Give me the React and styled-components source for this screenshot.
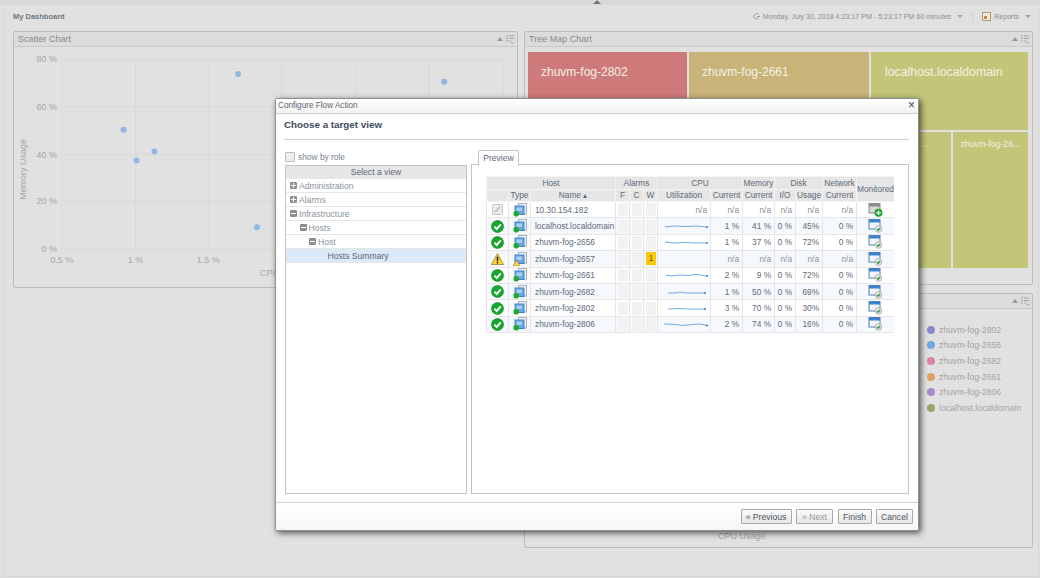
import React from "react";
import styled, { createGlobalStyle } from "styled-components";

const hosts = [
  { status: "none", name: "10.30.154.182", util: null, cpu: "n/a", mem: "n/a", io: "n/a", usage: "n/a", net: "n/a" },
  { status: "ok", name: "localhost.localdomain", util: [[7, 7], [16, 6], [28, 6.5], [38, 6], [49, 7]], cpu: "1 %", mem: "41 %", io: "0 %", usage: "45%", net: "0 %" },
  { status: "ok", name: "zhuvm-fog-2656", util: [[7, 6], [16, 7], [27, 6.5], [38, 7], [49, 7]], cpu: "1 %", mem: "37 %", io: "0 %", usage: "72%", net: "0 %" },
  { status: "warn", name: "zhuvm-fog-2657", util: null, alarm: 1, cpu: "n/a", mem: "n/a", io: "n/a", usage: "n/a", net: "n/a" },
  { status: "ok", name: "zhuvm-fog-2661", util: [[8, 6], [14, 7], [22, 6], [30, 6.5], [38, 5.5], [49, 7]], cpu: "2 %", mem: "9 %", io: "0 %", usage: "72%", net: "0 %" },
  { status: "ok", name: "zhuvm-fog-2682", util: [[10, 7], [18, 7], [22, 6], [28, 7], [47, 7]], cpu: "1 %", mem: "50 %", io: "0 %", usage: "69%", net: "0 %" },
  { status: "ok", name: "zhuvm-fog-2802", util: [[10, 7], [20, 6.5], [30, 7], [47, 7]], cpu: "3 %", mem: "70 %", io: "0 %", usage: "30%", net: "0 %" },
  { status: "ok", name: "zhuvm-fog-2806", util: [[6, 6], [18, 6.5], [24, 7.5], [34, 6.5], [42, 6], [49, 7.5]], cpu: "2 %", mem: "74 %", io: "0 %", usage: "16%", net: "0 %" },
];

const treeItems = [
  { label: "Administration", depth: 0, mark: "plus" },
  { label: "Alarms", depth: 0, mark: "plus" },
  { label: "Infrastructure", depth: 0, mark: "minus" },
  { label: "Hosts", depth: 1, mark: "minus" },
  { label: "Host", depth: 2, mark: "minus" },
  { label: "Hosts Summary", depth: 3, selected: true },
];

const legend = [
  ["zhuvm-fog-2802", "#8b88cc"],
  ["zhuvm-fog-2656", "#6ea8e0"],
  ["zhuvm-fog-2682", "#e080a8"],
  ["zhuvm-fog-2661", "#e0a060"],
  ["zhuvm-fog-2806", "#a88cd0"],
  ["localhost.localdomain", "#98a46c"],
];

const GlobalStyle = createGlobalStyle`
  html, body {
    margin: 0;
    padding: 0;
    height: 100%;
    overflow: hidden;
    background: #e1e1e1;
    font-family: "Liberation Sans", Arial, sans-serif;
    font-size: 8.5px;
  }
`;

const Page = styled.div`
  position: relative;
  width: 1040px;
  height: 578px;
  overflow: hidden;
  box-sizing: border-box;
  background: #e1e1e1;
`;

const TopStrip = styled.div`
  height: 5px;
  background: #d9d9d9;
  display: flex;
  justify-content: center;
  padding-left: 154px;
  &::before {
    content: "";
    border: 4px solid transparent;
    border-top: 0;
    border-bottom: 4px solid #777;
    height: 0;
  }
`;

const Frame = styled.div`
  box-sizing: border-box;
  height: 572px;
  margin: 0 1px 0 3px;
  padding: 0 4px 0 9px;
  border-left: 1px solid #d6d6d6;
  border-right: 1px solid #d6d6d6;
  border-bottom: 1px solid #d6d6d6;
`;

const DashHeader = styled.div`
  box-sizing: border-box;
  height: 26px;
  padding: 0 3px 3px 0;
  display: flex;
  align-items: center;
  justify-content: space-between;
  color: #8a8f96;
  font-size: 7.1px;
`;

const DashTitle = styled.span`
  font-weight: 700;
  color: #6f7883;
  font-size: 7.5px;
`;

const DashTools = styled.div`
  display: flex;
  align-items: center;
  gap: 3px;
`;

const Caret = styled.span`
  border: 3px solid transparent;
  border-top: 3.5px solid #a5a5a5;
  border-bottom: 0;
  margin-left: 3px;
`;

const ToolDivider = styled.span`
  width: 1px;
  height: 10px;
  background: #cfcfcf;
  margin: 0 6px;
`;

const Columns = styled.div`
  display: grid;
  grid-template-columns: 505px 509px;
  column-gap: 6px;
  align-items: start;
`;

const Stack = styled.div`
  display: flex;
  flex-direction: column;
  gap: 8px;
`;

const Panel = styled.section`
  box-sizing: border-box;
  height: ${(p) => p.$height}px;
  border: 1px solid #bdbdbd;
  border-radius: 2px;
  overflow: hidden;
  display: flex;
  flex-direction: column;
`;

const PanelHead = styled.header`
  flex: none;
  height: 14px;
  display: flex;
  align-items: center;
  justify-content: space-between;
  padding: 0 3px 0 4px;
  background: #dcdcdc;
  border-bottom: 1px solid #c9c9c9;
  color: #8a8a8a;
  font-size: 9px;
`;

const PanelTools = styled.span`
  display: flex;
  align-items: center;
  gap: 3px;
`;

const TreeMap = styled.div`
  flex: 1;
  display: flex;
  gap: 2px;
  padding: 5px 4px 16px 3px;
`;

const TreeCol = styled.div`
  width: ${(p) => p.$width}px;
  display: flex;
  flex-direction: column;
  gap: 2px;
`;

const TreeRow = styled.div`
  flex: 1;
  display: flex;
  gap: 2px;
`;

const Cell = styled.div`
  flex: ${(p) => p.$grow || 1} 1 0;
  min-width: 0;
  box-sizing: border-box;
  background: ${(p) => p.$bg};
  color: #f2f2e4;
  font-size: ${(p) => (p.$small ? 8.6 : 12)}px;
  padding: ${(p) => (p.$small ? "7px 7px" : "13px 13px")};
  white-space: nowrap;
  overflow: hidden;
`;

const TopCell = styled(Cell)`
  flex: none;
  height: 78px;
  padding-left: 14px;
  font-size: 12.3px;
`;

const LegendPanel = styled.div`
  flex: 1;
  position: relative;
  display: flex;
  justify-content: flex-end;
`;

const LegendList = styled.ul`
  list-style: none;
  margin: 0;
  padding: 13px 14px 0 0;
  width: 91px;
`;

const LegendItem = styled.li`
  height: 15.6px;
  display: flex;
  align-items: center;
  gap: 4px;
  color: #a3a3a3;
  font-size: 8.6px;
  white-space: nowrap;
`;

const Dot = styled.span`
  flex: none;
  width: 8px;
  height: 8px;
  border-radius: 50%;
  background: ${(p) => p.$color};
`;

const AxisCaption = styled.div`
  position: absolute;
  bottom: 6px;
  left: 193px;
  color: #aaa;
  font-size: 9px;
`;

const Dialog = styled.div`
  position: absolute;
  left: 275px;
  top: 98px;
  width: 644px;
  height: 433px;
  box-sizing: border-box;
  display: flex;
  flex-direction: column;
  background: #fff;
  border: 1px solid #8f8f8f;
  border-radius: 2px;
  box-shadow: 2px 2px 6px rgba(0, 0, 0, 0.65);
`;

const DialogBar = styled.div`
  flex: none;
  box-sizing: border-box;
  height: 15px;
  display: flex;
  align-items: center;
  justify-content: space-between;
  padding: 0 3px 2px 2px;
  background: linear-gradient(#fff, #f2f2f2);
  border-bottom: 1px solid #cfcfcf;
  color: #5b6570;
  font-size: 8.2px;
`;

const CloseBtn = styled.span`
  color: #444;
  font-size: 12px;
  line-height: 1;
`;

const DialogBody = styled.div`
  flex: 1;
  min-height: 0;
  display: flex;
  flex-direction: column;
  padding: 0 9px 8px 8px;
`;

const Heading = styled.h2`
  flex: none;
  margin: 0;
  height: 26px;
  box-sizing: border-box;
  line-height: 22px;
  border-bottom: 1px solid #cfcfcf;
  color: #3d4a5c;
  font-size: 9.8px;
  font-weight: 700;
`;

const Split = styled.div`
  flex: 1;
  min-height: 0;
  display: flex;
  gap: 4px;
  padding-top: 10px;
`;

const LeftCol = styled.div`
  width: 182px;
  margin-left: 1px;
  flex: none;
  display: flex;
  flex-direction: column;
`;

const RoleRow = styled.label`
  height: 13px;
  margin-bottom: 2px;
  display: flex;
  align-items: center;
  gap: 3px;
  color: #7b8590;
  font-size: 8.4px;
`;

const CheckBox = styled.span`
  width: 8px;
  height: 8px;
  background: #eee;
  border: 1px solid #bbb;
  border-radius: 1px;
`;

const TreeBox = styled.div`
  flex: 1;
  border: 1px solid #c4c4c4;
`;

const TreeHead = styled.div`
  height: 13px;
  background: #e7e7e7;
  text-align: center;
  line-height: 13px;
  color: #5d6a78;
  font-size: 8.6px;
`;

const TreeLine = styled.div`
  box-sizing: border-box;
  height: 14px;
  display: flex;
  align-items: center;
  gap: 2px;
  padding-left: ${(p) => 4 + p.$depth * 9.5}px;
  background: ${(p) => (p.$selected ? "#dce9f8" : "#fff")};
  border-bottom: 1px solid #e6e6e6;
  color: ${(p) => (p.$selected ? "#5d6a78" : "#8a939c")};
  font-size: 8.6px;
`;

const Expander = styled.span`
  position: relative;
  flex: none;
  width: 7px;
  height: 7px;
  background: #8f8f8f;
  border-radius: 1px;
  &::before {
    content: "";
    position: absolute;
    left: 1px;
    right: 1px;
    top: 3px;
    height: 1px;
    background: #fff;
  }
  &::after {
    content: "";
    display: ${(p) => (p.$mark === "plus" ? "block" : "none")};
    position: absolute;
    top: 1px;
    bottom: 1px;
    left: 3px;
    width: 1px;
    background: #fff;
  }
`;

const NoMark = styled.span`
  width: 7px;
`;

const RightCol = styled.div`
  flex: 1;
  min-width: 0;
  display: flex;
  flex-direction: column;
`;

const TabStrip = styled.div`
  height: 15px;
  flex: none;
  padding-left: 7px;
  margin-bottom: -1px;
  position: relative;
`;

const Tab = styled.span`
  display: inline-block;
  box-sizing: border-box;
  width: 41px;
  height: 16px;
  line-height: 15px;
  text-align: center;
  background: #fff;
  border: 1px solid #c4c4c4;
  border-bottom: 0;
  border-radius: 2px 2px 0 0;
  color: #5d6a78;
  font-size: 8.6px;
`;

const TabPanel = styled.div`
  flex: 1;
  border: 1px solid #c4c4c4;
  padding: 11px 14px 0 14px;
`;

const GridClip = styled.div`
  width: 408px;
  overflow: hidden;
`;

const HostTable = styled.table`
  width: 408px;
  table-layout: fixed;
  border-collapse: collapse;
  font-size: 8.3px;
`;

const Th = styled.th`
  height: ${(p) => (p.$tall ? 24 : 11.5)}px;
  padding: 0;
  background: #e6e6e6;
  border: 1px solid #f4f4f4;
  color: #5d6a78;
  font-weight: 400;
  text-align: center;
  white-space: nowrap;
  overflow: hidden;
`;

const Tr = styled.tr`
  background: ${(p) => (p.$tint ? "#f5f8fc" : "#fff")};
`;

const Td = styled.td`
  height: 16.4px;
  padding: 0 ${(p) => (p.$align === "right" ? 3 : 2)}px 0 ${(p) => (p.$align === "left" ? 4 : 2)}px;
  border: 1px solid #e6e6e6;
  color: ${(p) => (p.$muted ? "#8a939c" : "#5d6a78")};
  text-align: ${(p) => p.$align || "center"};
  white-space: nowrap;
  overflow: hidden;
  box-sizing: border-box;
`;

const IconCell = styled(Td)`
  padding: 0;
  line-height: 0;
`;

const AlarmSlot = styled.span`
  display: block;
  width: 10px;
  height: 13px;
  margin: 0 auto;
  line-height: 13px;
  text-align: center;
  background: ${(p) => (p.$on ? "#fcc800" : "#f2f2f2")};
  color: #5c5030;
`;

const DialogFoot = styled.footer`
  flex: none;
  box-sizing: border-box;
  height: 28px;
  display: flex;
  align-items: center;
  justify-content: flex-end;
  gap: 4.5px;
  padding: 0 5px 0 0;
  border-top: 1px solid #d4d4d4;
  background: linear-gradient(#fff, #f6f6f6);
`;

const Btn = styled.button`
  box-sizing: border-box;
  width: ${(p) => p.$width}px;
  height: 15px;
  padding: 0;
  background: linear-gradient(#fbfbfb, #e6e6e6);
  border: 1px solid #a9a9a9;
  border-radius: 1px;
  color: ${(p) => (p.disabled ? "#9a9a9a" : "#4c5560")};
  font-family: inherit;
  font-size: 8.6px;
`;

const StatusIcon = ({ status }) => {
  if (status === "ok") {
    return (
      <svg width="13" height="13" viewBox="0 0 13 13">
        <circle cx="6.5" cy="6.5" r="6" fill="#12a82c" stroke="#0d7a20" strokeWidth="0.6" />
        <path d="M3.4 6.6 L5.7 9 L9.8 4.3" fill="none" stroke="#fff" strokeWidth="2" />
      </svg>
    );
  }
  if (status === "warn") {
    return (
      <svg width="13" height="12" viewBox="0 0 13 12">
        <path d="M6.5 0.5 L12.6 11.5 H0.4 Z" fill="#fbd43a" stroke="#8a7220" strokeWidth="0.7" />
        <path d="M6.5 3.6 V8" stroke="#222" strokeWidth="1.5" />
        <rect x="5.7" y="8.8" width="1.6" height="1.6" fill="#222" />
      </svg>
    );
  }
  return (
    <svg width="11" height="11" viewBox="0 0 11 11">
      <rect x="0.5" y="0.5" width="10" height="10" rx="1" fill="#ececec" stroke="#c4c4c4" />
      <path d="M3 8 L8 3" stroke="#b5b5b5" strokeWidth="1.4" />
    </svg>
  );
};

const HostIcon = ({ status }) => (
  <svg width="14" height="14" viewBox="0 0 14 14">
    <rect x="5.5" y="0.5" width="8" height="10.5" fill="#f0f3f6" stroke="#a9b2ba" />
    <rect x="2" y="3" width="9" height="8.5" fill="#6aa5e2" stroke="#3f83cc" />
    <rect x="3.5" y="4.5" width="5.5" height="3.5" fill="#a9d0f3" />
    {status === "warn" ? (
      <path d="M3.5 8 L7 14 H0 Z" fill="#fbd43a" stroke="#8a7220" strokeWidth="0.5" />
    ) : (
      <circle cx="3.2" cy="10.8" r="2.8" fill="#1faa2b" />
    )}
  </svg>
);

const MonitorIcon = ({ add }) => (
  <svg width="15" height="14" viewBox="0 0 15 14">
    <rect x="1" y="0.5" width="11" height="9.5" fill={add ? "#d8d8d8" : "#f2f6fb"} stroke={add ? "#8c8c8c" : "#4f7fb5"} />
    <rect x="1" y="0.5" width="11" height="3" fill={add ? "#8c8c8c" : "#3f82cc"} />
    {add ? (
      <>
        <circle cx="10.5" cy="9.8" r="4" fill="#1ea52c" />
        <path d="M8.3 9.8 H12.7 M10.5 7.6 V12" stroke="#fff" strokeWidth="1.3" />
      </>
    ) : (
      <>
        <circle cx="10.5" cy="10" r="3.4" fill="#e4e4e4" stroke="#999" strokeWidth="0.6" />
        <path d="M8.9 10 L10.2 11.3 L12.2 8.8" fill="none" stroke="#1c9a2c" strokeWidth="1.2" />
      </>
    )}
  </svg>
);

const Spark = ({ points }) => {
  const [ex, ey] = points[points.length - 1];
  return (
    <svg width="53" height="12" viewBox="0 0 53 12">
      <polyline points={points.map((p) => p.join(",")).join(" ")} fill="none" stroke="#62a0e0" strokeWidth="0.9" />
      <circle cx={ex} cy={ey} r="1.1" fill="#3c86d2" />
    </svg>
  );
};

const PanelIcons = () => (
  <PanelTools>
    <svg width="6" height="4" viewBox="0 0 6 4">
      <path d="M0 4 L3 0 L6 4 Z" fill="#999" />
    </svg>
    <svg width="8" height="9" viewBox="0 0 8 9">
      <path d="M0 1 H2 M3 1 H8 M0 3.5 H2 M3 3.5 H8 M0 6 H2 M3 6 H5 M5 7 L6.5 8.5 L8 7" fill="none" stroke="#a5a5a5" />
    </svg>
  </PanelTools>
);

const axisFont = { fontSize: 9, fill: "#a6a6a6", fontFamily: "Liberation Sans" };

const ScatterChart = () => {
  const xs = [47, 121, 194, 268, 342, 416, 490];
  const ys = [12.5, 60, 108, 155, 203];
  const dots = [[224, 27], [431, 35], [109, 83], [122, 114], [140, 105], [243, 181]];
  const ylabels = ["80 %", "60 %", "40 %", "20 %", "0 %"];
  const xlabels = ["0.5 %", "1 %", "1.5 %"];
  return (
    <svg width="503" height="241" viewBox="0 0 503 241">
      {xs.map((x) => (
        <line key={x} x1={x} x2={x} y1="12.5" y2="203" stroke="#d9d9d9" />
      ))}
      {ys.map((y) => (
        <line key={y} x1="47" x2="490" y1={y} y2={y} stroke="#d9d9d9" />
      ))}
      {ylabels.map((t, i) => (
        <text key={t} x="42" y={ys[i] + 3} textAnchor="end" {...axisFont}>
          {t}
        </text>
      ))}
      {xlabels.map((t, i) => (
        <text key={t} x={xs[i]} y="217" textAnchor="middle" {...axisFont}>
          {t}
        </text>
      ))}
      <text x="246" y="230" {...axisFont}>CPU Usage</text>
      <text transform="translate(11 123) rotate(-90)" textAnchor="middle" {...axisFont}>
        Memory Usage
      </text>
      {dots.map(([x, y]) => (
        <circle key={x} cx={x} cy={y} r="3" fill="#8fb8e6" />
      ))}
    </svg>
  );
};

export default function App() {
  return (
    <Page>
      <GlobalStyle />
      <TopStrip />
      <Frame>
        <DashHeader>
          <DashTitle>My Dashboard</DashTitle>
          <DashTools>
            <svg width="7" height="7" viewBox="0 0 7 7">
              <path d="M5.5 1.5 A2.6 2.6 0 1 0 5.8 4.5" fill="none" stroke="#9aa0a6" />
              <path d="M4 3.5 H7" stroke="#9aa0a6" />
            </svg>
            <span>Monday, July 30, 2018 4:23:17 PM - 5:23:17 PM 60 minutes</span>
            <Caret />
            <ToolDivider />
            <svg width="9" height="9" viewBox="0 0 9 9">
              <rect x="0.5" y="0.5" width="8" height="8" fill="#f0e8d8" stroke="#b09a70" />
              <rect x="2" y="4" width="3" height="3" fill="#d08a50" />
            </svg>
            <span>Reports</span>
            <Caret />
          </DashTools>
        </DashHeader>
        <Columns>
          <Panel $height={257}>
            <PanelHead>
              Scatter Chart
              <PanelIcons />
            </PanelHead>
            <ScatterChart />
          </Panel>
          <Stack>
            <Panel $height={254}>
              <PanelHead>
                Tree Map Chart
                <PanelIcons />
              </PanelHead>
              <TreeMap>
                <TreeCol $width={159}>
                  <Cell $bg="#cf7a7a">zhuvm-fog-2802</Cell>
                </TreeCol>
                <TreeCol $width={180}>
                  <Cell $bg="#c8b478">zhuvm-fog-2661</Cell>
                </TreeCol>
                <TreeCol $width={157}>
                  <TopCell $bg="#c3c678">localhost.localdomain</TopCell>
                  <TreeRow>
                    <Cell $bg="#c3c678" $small $grow={81}>zhuvm-fog-...</Cell>
                    <Cell $bg="#c3c678" $small $grow={74}>zhuvm-fog-26...</Cell>
                  </TreeRow>
                </TreeCol>
              </TreeMap>
            </Panel>
            <Panel $height={255}>
              <PanelHead>
                <span />
                <PanelIcons />
              </PanelHead>
              <LegendPanel>
                <LegendList>
                  {legend.map(([name, color]) => (
                    <LegendItem key={name}>
                      <Dot $color={color} />
                      {name}
                    </LegendItem>
                  ))}
                </LegendList>
                <AxisCaption>CPU Usage</AxisCaption>
              </LegendPanel>
            </Panel>
          </Stack>
        </Columns>
      </Frame>

      <Dialog>
        <DialogBar>
          Configure Flow Action
          <CloseBtn>×</CloseBtn>
        </DialogBar>
        <DialogBody>
          <Heading>Choose a target view</Heading>
          <Split>
            <LeftCol>
              <RoleRow>
                <CheckBox />
                show by role
              </RoleRow>
              <TreeBox>
                <TreeHead>Select a view</TreeHead>
                {treeItems.map((item) => (
                  <TreeLine key={item.label} $depth={item.depth} $selected={item.selected}>
                    {item.mark ? <Expander $mark={item.mark} /> : <NoMark />}
                    {item.label}
                  </TreeLine>
                ))}
              </TreeBox>
            </LeftCol>
            <RightCol>
              <TabStrip>
                <Tab>Preview</Tab>
              </TabStrip>
              <TabPanel>
                <GridClip>
                  <HostTable>
                    <colgroup>
                      <col style={{ width: 22 }} />
                      <col style={{ width: 22 }} />
                      <col style={{ width: 85 }} />
                      <col style={{ width: 14 }} />
                      <col style={{ width: 14 }} />
                      <col style={{ width: 14 }} />
                      <col style={{ width: 53 }} />
                      <col style={{ width: 32 }} />
                      <col style={{ width: 32 }} />
                      <col style={{ width: 21 }} />
                      <col style={{ width: 27 }} />
                      <col style={{ width: 34 }} />
                      <col style={{ width: 38 }} />
                    </colgroup>
                    <thead>
                      <tr>
                        <Th colSpan={3}>Host</Th>
                        <Th colSpan={3}>Alarms</Th>
                        <Th colSpan={2}>CPU</Th>
                        <Th>Memory</Th>
                        <Th colSpan={2}>Disk</Th>
                        <Th>Network</Th>
                        <Th rowSpan={2} $tall>Monitored</Th>
                      </tr>
                      <tr>
                        <Th />
                        <Th>Type</Th>
                        <Th>Name ▴</Th>
                        <Th>F</Th>
                        <Th>C</Th>
                        <Th>W</Th>
                        <Th>Utilization</Th>
                        <Th>Current</Th>
                        <Th>Current</Th>
                        <Th>I/O</Th>
                        <Th>Usage</Th>
                        <Th>Current</Th>
                      </tr>
                    </thead>
                    <tbody>
                      {hosts.map((h, i) => (
                        <Tr key={h.name} $tint={i % 2 === 1}>
                          <IconCell><StatusIcon status={h.status} /></IconCell>
                          <IconCell><HostIcon status={h.status} /></IconCell>
                          <Td $align="left">{h.name}</Td>
                          <Td><AlarmSlot /></Td>
                          <Td><AlarmSlot /></Td>
                          <Td><AlarmSlot $on={!!h.alarm}>{h.alarm}</AlarmSlot></Td>
                          {h.util ? (
                            <IconCell><Spark points={h.util} /></IconCell>
                          ) : (
                            <Td $align="right" $muted>{h.status === "warn" ? "" : "n/a"}</Td>
                          )}
                          <Td $align="right" $muted={h.cpu === "n/a"}>{h.cpu}</Td>
                          <Td $align="right" $muted={h.mem === "n/a"}>{h.mem}</Td>
                          <Td $align="right" $muted={h.io === "n/a"}>{h.io}</Td>
                          <Td $align="right" $muted={h.usage === "n/a"}>{h.usage}</Td>
                          <Td $align="right" $muted={h.net === "n/a"}>{h.net}</Td>
                          <IconCell><MonitorIcon add={i === 0} /></IconCell>
                        </Tr>
                      ))}
                    </tbody>
                  </HostTable>
                </GridClip>
              </TabPanel>
            </RightCol>
          </Split>
        </DialogBody>
        <DialogFoot>
          <Btn $width={51}>« Previous</Btn>
          <Btn $width={37} disabled>» Next</Btn>
          <Btn $width={34}>Finish</Btn>
          <Btn $width={37}>Cancel</Btn>
        </DialogFoot>
      </Dialog>
    </Page>
  );
}
